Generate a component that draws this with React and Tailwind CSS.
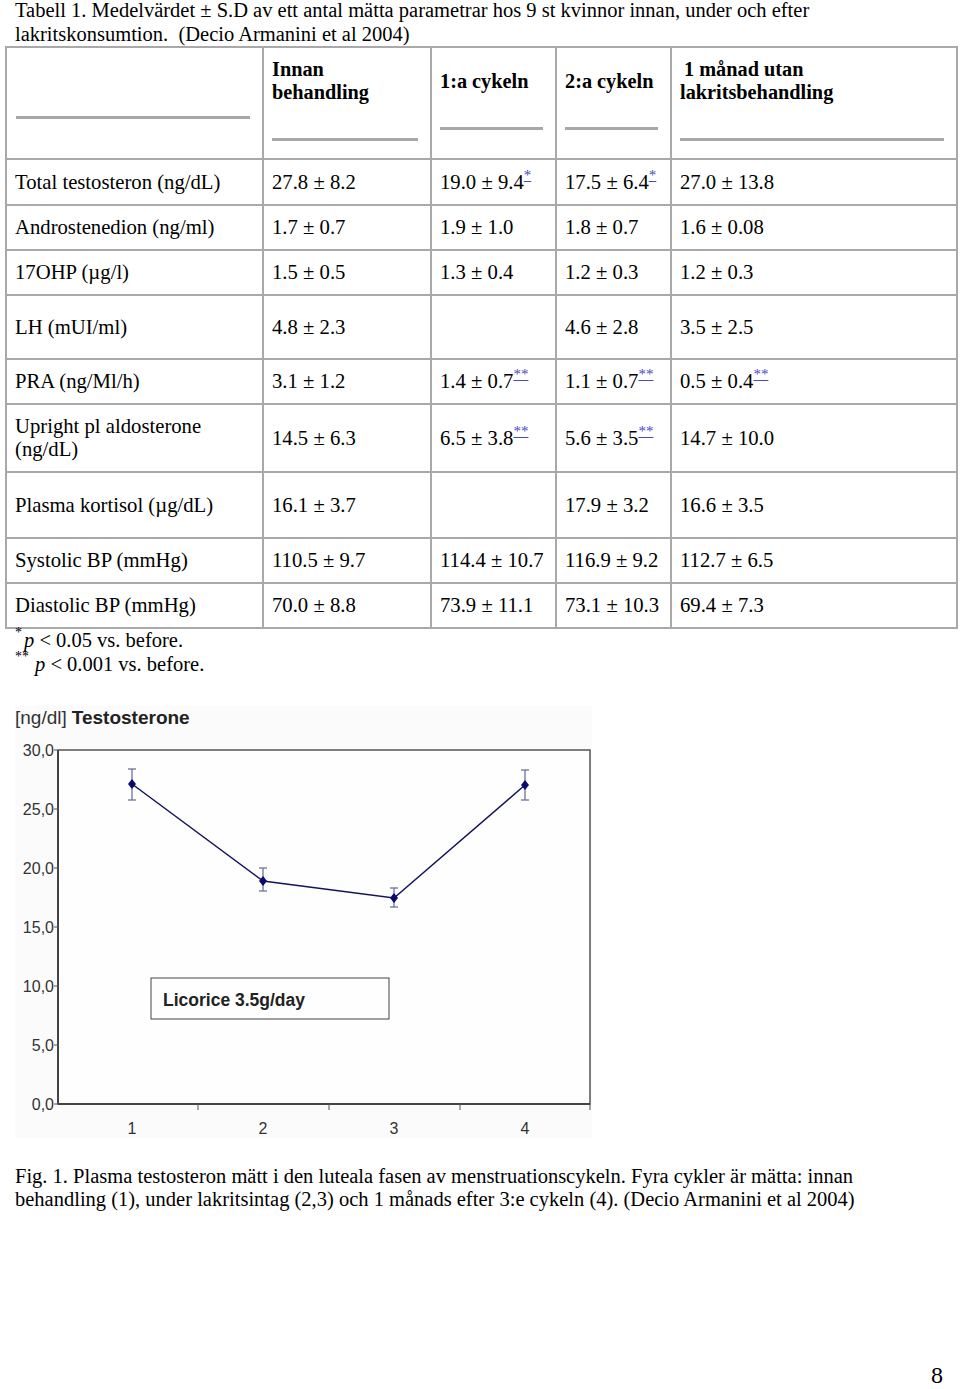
const serif = { fontFamily: '"Liberation Serif", "Times New Roman", serif' };

const rows = [
  { label: 'Total testosteron (ng/dL)', h: 'h-[46px]', v: [['27.8 ± 8.2'], ['19.0 ± 9.4', '*'], ['17.5 ± 6.4', '*'], ['27.0 ± 13.8']] },
  { label: 'Androstenedion (ng/ml)', h: 'h-[45px]', v: [['1.7 ± 0.7'], ['1.9 ± 1.0'], ['1.8 ± 0.7'], ['1.6 ± 0.08']] },
  { label: '17OHP (µg/l)', h: 'h-[45px]', v: [['1.5 ± 0.5'], ['1.3 ± 0.4'], ['1.2 ± 0.3'], ['1.2 ± 0.3']] },
  { label: 'LH (mUI/ml)', h: 'h-[64px]', v: [['4.8 ± 2.3'], [''], ['4.6 ± 2.8'], ['3.5 ± 2.5']] },
  { label: 'PRA (ng/Ml/h)', h: 'h-[45px]', v: [['3.1 ± 1.2'], ['1.4 ± 0.7', '**'], ['1.1 ± 0.7', '**'], ['0.5 ± 0.4', '**']] },
  { label: ['Upright pl aldosterone', '(ng/dL)'], h: 'h-[68px]', v: [['14.5 ± 6.3'], ['6.5 ± 3.8', '**'], ['5.6 ± 3.5', '**'], ['14.7 ± 10.0']] },
  { label: 'Plasma kortisol (µg/dL)', h: 'h-[66px]', v: [['16.1 ± 3.7'], [''], ['17.9 ± 3.2'], ['16.6 ± 3.5']] },
  { label: 'Systolic BP (mmHg)', h: 'h-[45px]', v: [['110.5 ± 9.7'], ['114.4 ± 10.7'], ['116.9 ± 9.2'], ['112.7 ± 6.5']] },
  { label: 'Diastolic BP (mmHg)', h: 'h-[45px]', v: [['70.0 ± 8.8'], ['73.9 ± 11.1'], ['73.1 ± 10.3'], ['69.4 ± 7.3']] },
];

function Star({ s }) {
  return (
    <span className="inline-block align-top text-[15px] leading-[15px] -mt-[3px] text-[#4a48c8] underline decoration-[#4a48c8] underline-offset-[1px]">
      {s}
    </span>
  );
}

function HeadRule({ mt }) {
  return <div className={`h-[3px] bg-[#a8a8a8] ${mt}`} />;
}

function Chart() {
  const ys = (v) => 398 - v * 11.8;
  const pts = [
    { x: 117, y: 78, lo: 63, hi: 94 },
    { x: 248, y: 175, lo: 162, hi: 185 },
    { x: 379, y: 192, lo: 182, hi: 201 },
    { x: 510, y: 79, lo: 64, hi: 94 },
  ];
  const ticks = [30, 25, 20, 15, 10, 5, 0];
  return (
    <svg width="577" height="432" className="block bg-[#fbfbfb]" style={{ fontFamily: '"Liberation Sans", Arial, sans-serif' }}>
      <text x="0" y="18" fontSize="19" fill="#222">
        <tspan fontWeight="normal" fill="#333">[ng/dl]</tspan>
        <tspan fontWeight="bold" dx="5">Testosterone</tspan>
      </text>
      <rect x="43" y="44" width="532" height="354" fill="#fefefe" stroke="#555" strokeWidth="1.5" />
      <line x1="43" y1="398" x2="575" y2="398" stroke="#444" strokeWidth="2" />
      <line x1="43" y1="44" x2="43" y2="398" stroke="#444" strokeWidth="2" />
      {ticks.map((t) => (
        <g key={t}>
          <line x1="39" y1={ys(t)} x2="43" y2={ys(t)} stroke="#555" strokeWidth="1" />
          <text x="39" y={ys(t) + 6} fontSize="16" fill="#333" textAnchor="end">
            {t.toFixed(1).replace('.', ',')}
          </text>
        </g>
      ))}
      {[183, 314, 445, 575].map((x) => (
        <line key={x} x1={x} y1="398" x2={x} y2="404" stroke="#555" strokeWidth="1" />
      ))}
      {pts.map((p, i) => (
        <text key={i} x={p.x} y="428" fontSize="16" fill="#333" textAnchor="middle">
          {i + 1}
        </text>
      ))}
      <polyline points={pts.map((p) => `${p.x},${p.y}`).join(' ')} fill="none" stroke="#14145a" strokeWidth="1.5" />
      {pts.map((p, i) => (
        <g key={i} stroke="#6f6fa0" strokeWidth="1.3">
          <line x1={p.x} y1={p.lo} x2={p.x} y2={p.hi} />
          <line x1={p.x - 4} y1={p.lo} x2={p.x + 4} y2={p.lo} />
          <line x1={p.x - 4} y1={p.hi} x2={p.x + 4} y2={p.hi} />
          <polygon
            points={`${p.x},${p.y - 5} ${p.x + 4},${p.y} ${p.x},${p.y + 5} ${p.x - 4},${p.y}`}
            fill="#0a0a70"
            stroke="none"
          />
        </g>
      ))}
      <rect x="136" y="272" width="238" height="41" fill="#fefefe" stroke="#444" strokeWidth="1" />
      <text x="148" y="300" fontSize="17.5" fontWeight="bold" fill="#222">
        Licorice 3.5g/day
      </text>
    </svg>
  );
}

export default function App() {
  return (
    <div className="relative min-h-[1389px] w-[960px] bg-white text-black flex flex-col" style={serif}>
      <p className="pl-[15px] pr-[100px] text-[20.5px] leading-[24px] -mt-[2px]">
        Tabell 1. Medelvärdet ± S.D av ett antal mätta parametrar hos 9 st kvinnor innan, under och efter lakritskonsumtion.&nbsp; (Decio Armanini et al 2004)
      </p>

      <table className="ml-[5px] mt-0 w-[951px] table-fixed border-collapse border-2 border-[#a9a9a9] text-[20.7px]">
        <colgroup>
          <col className="w-[257px]" />
          <col className="w-[168px]" />
          <col className="w-[125px]" />
          <col className="w-[115px]" />
          <col className="w-[286px]" />
        </colgroup>
        <tbody>
          <tr className="h-[112px] align-top">
            <td className="border-2 border-[#a9a9a9] pl-[9px] pr-[12px]">
              <HeadRule mt="mt-[68px]" />
            </td>
            <td className="border-2 border-[#a9a9a9] pl-[8px] pr-[12px] pt-[10px] font-bold text-[20.3px] leading-[23px]">
              <div>Innan</div>
              <div>behandling</div>
              <HeadRule mt="mt-[34px]" />
            </td>
            <td className="border-2 border-[#a9a9a9] pl-[8px] pr-[12px] pt-[22px] font-bold text-[20.3px] leading-[23px]">
              <div>1:a cykeln</div>
              <HeadRule mt="mt-[34px]" />
            </td>
            <td className="border-2 border-[#a9a9a9] pl-[8px] pr-[12px] pt-[22px] font-bold text-[20.3px] leading-[23px]">
              <div>2:a cykeln</div>
              <HeadRule mt="mt-[34px]" />
            </td>
            <td className="border-2 border-[#a9a9a9] pl-[8px] pr-[12px] pt-[10px] font-bold text-[20.3px] leading-[23px]">
              <div className="pl-[4px]">1 månad utan</div>
              <div>lakritsbehandling</div>
              <HeadRule mt="mt-[34px]" />
            </td>
          </tr>
          {rows.map((r, i) => (
            <tr key={i} className={`${r.h} align-middle leading-[23px]`}>
              <td className="border-2 border-[#a9a9a9] pl-[8px] pr-[6px]">
                {Array.isArray(r.label) ? r.label.map((l) => <div key={l}>{l}</div>) : r.label}
              </td>
              {r.v.map(([txt, star], j) => (
                <td key={j} className="border-2 border-[#a9a9a9] pl-[8px] pr-[2px] whitespace-nowrap">
                  {txt}
                  {star && <Star s={star} />}
                </td>
              ))}
            </tr>
          ))}
        </tbody>
      </table>

      <div className="pl-[15px] text-[20.5px] leading-[24px] -mt-[1px]">
        <div>
          <span className="inline-block align-top text-[14px] leading-[14px] -mt-[2px] mr-[2px]">*</span>
          <i>p</i> &lt; 0.05 vs. before.
        </div>
        <div>
          <span className="inline-block align-top text-[14px] leading-[14px] -mt-[2px] mr-[6px]">**</span>
          <i>p</i> &lt; 0.001 vs. before.
        </div>
      </div>

      <div className="ml-[15px] mt-[30px]">
        <Chart />
      </div>

      <p className="pl-[15px] pr-[80px] mt-[27px] text-[20.5px] leading-[23px]">
        Fig. 1. Plasma testosteron mätt i den luteala fasen av menstruationscykeln. Fyra cykler är mätta: innan behandling (1), under lakritsintag (2,3) och 1 månads efter 3:e cykeln (4). (Decio Armanini et al 2004)
      </p>

      <div className="mt-auto flex justify-end pr-[17px] text-[24px] leading-[28px] pb-[0px]">8</div>
    </div>
  );
}
